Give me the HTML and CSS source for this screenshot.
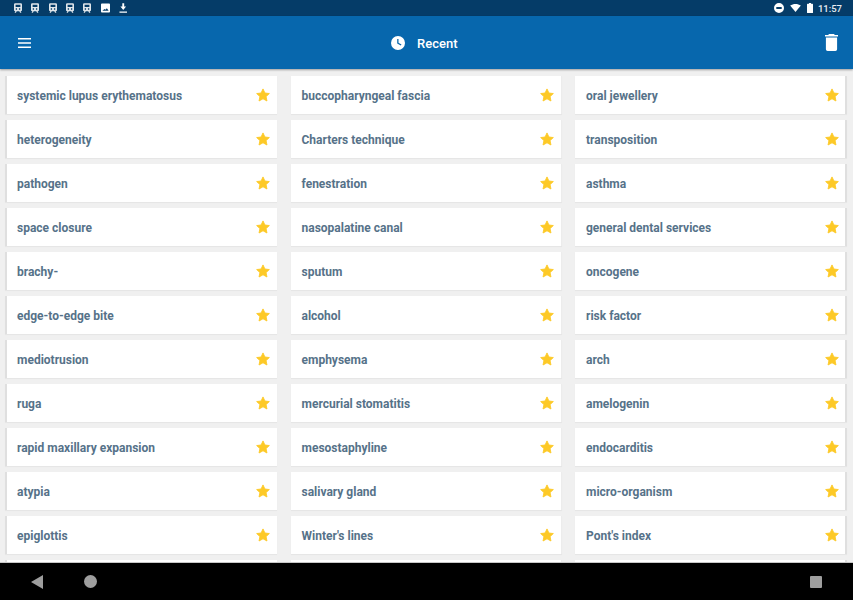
FILE: index.html
```html
<!DOCTYPE html>
<html lang="en">
<head>
<meta charset="utf-8">
<title>Recent</title>
<link rel="stylesheet" href="styles.css">
</head>
<body>
<svg class="defs" width="0" height="0" aria-hidden="true">
  <defs>
    <symbol id="star" viewBox="0 0 24 24"><path d="M12 1.600l3.300 7 7.600.9-5.600 5.200 1.500 7.600L12 18.500l-6.800 3.800 1.500-7.600L1.100 9.500l7.600-.9z" stroke-linejoin="round"/></symbol>
    <symbol id="train" viewBox="0 0 10 12"><path fill-rule="evenodd" d="M1.500 0h7A1.500 1.500 0 0 1 10 1.500v7A1.500 1.500 0 0 1 8.500 10h-.2l1 2H7.600l-1-2H3.400l-1 2H.7l1-2h-.2A1.500 1.500 0 0 1 0 8.500v-7A1.500 1.500 0 0 1 1.500 0zM2 2v2.600h6V2zm.2 4.400v1.700h1.600V6.400zm4 0v1.700h1.600V6.400z"/></symbol>
  </defs>
</svg>
<div class="screen">
  <div class="status">
    <div class="status-icons">
      <svg class="ic-train"><use href="#train"/></svg>
      <svg class="ic-train"><use href="#train"/></svg>
      <svg class="ic-train"><use href="#train"/></svg>
      <svg class="ic-train"><use href="#train"/></svg>
      <svg class="ic-train"><use href="#train"/></svg>
      <svg class="ic-img" viewBox="0 0 10 10"><path fill-rule="evenodd" d="M1 0h8a1 1 0 0 1 1 1v8a1 1 0 0 1-1 1H1a1 1 0 0 1-1-1V1a1 1 0 0 1 1-1zm.5 8h7L6.500 5.200 5 7 4 6z"/></svg>
      <svg class="ic-dl" viewBox="0 0 9 10"><path d="M3.500 0h2v3.500h2L4.500 7l-3-3.500h2zM.5 8.700h8V10h-8z"/></svg>
    </div>
    <div class="status-right">
      <svg class="ic-dnd" viewBox="0 0 10 10"><path fill-rule="evenodd" d="M5 0a5 5 0 1 1 0 10A5 5 0 0 1 5 0zM2.300 4v2h5.400V4z"/></svg>
      <svg class="ic-wifi" viewBox="0 0 12 9"><path d="M0 1.800C3.500-.6 8.500-.6 12 1.800L6 9z"/></svg>
      <svg class="ic-batt" viewBox="0 0 6 10"><path d="M2 0h2v.8h1.400a.6.600 0 0 1 .6.600v8a.6.600 0 0 1-.6.600H.6A.6.600 0 0 1 0 9.400v-8A.6.600 0 0 1 .6.800H2z"/></svg>
      <span class="time">11:57</span>
    </div>
  </div>
  <header class="appbar">
    <svg class="ic-menu" viewBox="0 0 13 10"><path d="M0 0h13v1.500H0zM0 4.200h13v1.500H0zM0 8.500h13V10H0z"/></svg>
    <div class="title">
      <svg class="ic-clock" viewBox="0 0 14 14"><path fill-rule="evenodd" d="M7 0a7 7 0 1 1 0 14A7 7 0 0 1 7 0zM6.200 3v4.500l3.600 2.100.7-1.100-3-1.800V3z"/></svg>
      <span>Recent</span>
    </div>
    <svg class="ic-trash" viewBox="0 0 13 17"><path d="M4 0h5l.8.9H13v1.700H0V.9h3.200zM.9 3.600h11.200V15.300a1.700 1.700 0 0 1-1.700 1.700H2.600a1.700 1.700 0 0 1-1.700-1.700z"/></svg>
  </header>
  <main class="grid">
    <div class="card"><span>systemic lupus erythematosus</span><svg class="star"><use href="#star"/></svg></div>
    <div class="card"><span>buccopharyngeal fascia</span><svg class="star"><use href="#star"/></svg></div>
    <div class="card"><span>oral jewellery</span><svg class="star"><use href="#star"/></svg></div>
    <div class="card"><span>heterogeneity</span><svg class="star"><use href="#star"/></svg></div>
    <div class="card"><span>Charters technique</span><svg class="star"><use href="#star"/></svg></div>
    <div class="card"><span>transposition</span><svg class="star"><use href="#star"/></svg></div>
    <div class="card"><span>pathogen</span><svg class="star"><use href="#star"/></svg></div>
    <div class="card"><span>fenestration</span><svg class="star"><use href="#star"/></svg></div>
    <div class="card"><span>asthma</span><svg class="star"><use href="#star"/></svg></div>
    <div class="card"><span>space closure</span><svg class="star"><use href="#star"/></svg></div>
    <div class="card"><span>nasopalatine canal</span><svg class="star"><use href="#star"/></svg></div>
    <div class="card"><span>general dental services</span><svg class="star"><use href="#star"/></svg></div>
    <div class="card"><span>brachy-</span><svg class="star"><use href="#star"/></svg></div>
    <div class="card"><span>sputum</span><svg class="star"><use href="#star"/></svg></div>
    <div class="card"><span>oncogene</span><svg class="star"><use href="#star"/></svg></div>
    <div class="card"><span>edge-to-edge bite</span><svg class="star"><use href="#star"/></svg></div>
    <div class="card"><span>alcohol</span><svg class="star"><use href="#star"/></svg></div>
    <div class="card"><span>risk factor</span><svg class="star"><use href="#star"/></svg></div>
    <div class="card"><span>mediotrusion</span><svg class="star"><use href="#star"/></svg></div>
    <div class="card"><span>emphysema</span><svg class="star"><use href="#star"/></svg></div>
    <div class="card"><span>arch</span><svg class="star"><use href="#star"/></svg></div>
    <div class="card"><span>ruga</span><svg class="star"><use href="#star"/></svg></div>
    <div class="card"><span>mercurial stomatitis</span><svg class="star"><use href="#star"/></svg></div>
    <div class="card"><span>amelogenin</span><svg class="star"><use href="#star"/></svg></div>
    <div class="card"><span>rapid maxillary expansion</span><svg class="star"><use href="#star"/></svg></div>
    <div class="card"><span>mesostaphyline</span><svg class="star"><use href="#star"/></svg></div>
    <div class="card"><span>endocarditis</span><svg class="star"><use href="#star"/></svg></div>
    <div class="card"><span>atypia</span><svg class="star"><use href="#star"/></svg></div>
    <div class="card"><span>salivary gland</span><svg class="star"><use href="#star"/></svg></div>
    <div class="card"><span>micro-organism</span><svg class="star"><use href="#star"/></svg></div>
    <div class="card"><span>epiglottis</span><svg class="star"><use href="#star"/></svg></div>
    <div class="card"><span>Winter's lines</span><svg class="star"><use href="#star"/></svg></div>
    <div class="card"><span>Pont's index</span><svg class="star"><use href="#star"/></svg></div>
    <div class="card"></div>
    <div class="card"></div>
    <div class="card"></div>
  </main>
  <nav class="navbar">
    <svg class="ic-back" viewBox="0 0 12 14"><path d="M12 0v14L0 7z"/></svg>
    <div class="ic-home"></div>
    <div class="ic-recents"></div>
  </nav>
</div>
</body>
</html>
```
FILE: styles.css
```css
* { box-sizing: border-box; }
html, body { margin: 0; padding: 0; }
body { width: 853px; height: 600px; overflow: hidden; font-family: Roboto, "Liberation Sans", sans-serif; background: #f0f0f0; }
.defs { display: block; height: 0; }
.screen { width: 853px; height: 600px; display: flex; flex-direction: column; overflow: hidden; }

.status { flex: 0 0 16px; background: #053c68; display: flex; justify-content: space-between; align-items: center; padding: 0 11px 0 14px; color: #fff; }
.status-icons, .status-right { display: flex; align-items: center; }
.status-icons svg { fill: #dfe5ea; }
.ic-train { width: 8px; height: 10px; margin-right: 9.330px; }
.status-icons .ic-img { width: 9px; height: 10px; margin: 0 9px 0 0; fill: #fff; }
.status-icons .ic-dl { width: 8.500px; height: 10px; fill: #fff; }
.status-right svg { fill: #fff; }
.ic-dnd { width: 10px; height: 10px; margin-right: 6px; }
.ic-wifi { width: 11px; height: 8px; margin-right: 6px; }
.ic-batt { width: 6px; height: 10px; margin-right: 5px; }
.time { font-size: 9.500px; font-weight: 500; color: #e8edf2; }

.appbar { flex: 0 0 53px; background: #0767ad; display: flex; align-items: center; justify-content: space-between; padding: 0 15px 0 18px; position: relative; box-shadow: 0 1px 2px rgba(0,0,0,.35); z-index: 1; fill: #fff; }
.ic-menu { width: 13px; height: 10px; }
.ic-trash { width: 13px; height: 17px; }
.title { position: absolute; left: 391px; top: 0; height: 53px; display: flex; align-items: center; color: #fff; font-size: 13px; font-weight: 500; padding-top: 1px; }
.title span { margin-left: 12px; }
.ic-clock { width: 14px; height: 14px; margin-bottom: 1px; }

.grid { flex: 1 1 auto; min-height: 0; overflow: hidden; padding: 7px 0 0 5px; display: grid; grid-template-columns: 272px 271px 272px; column-gap: 13.500px; grid-auto-rows: 38px; row-gap: 6px; align-content: start; background: #f0f0f0; }
.card { background: #fff; display: flex; align-items: center; justify-content: space-between; padding: 0 6.500px 0 11px; box-shadow: 0 1px 1px rgba(0,0,0,.04); border-right: 1px solid #ececec; }
.card:nth-child(3n+1) { border-left: 2px solid #dfdfdf; border-right: 0; padding: 0 7px 0 10px; }
.card:nth-child(3n) { border-right: 2px solid #dfdfdf; padding: 0 6px 0 11px; }
.card span { font-size: 12px; font-weight: 700; color: #567289; white-space: nowrap; margin-top: 1px; }
.star { width: 14px; height: 14px; fill: #fdc927; stroke: #fdc927; stroke-width: 1.500; overflow: visible; }

.navbar { flex: 0 0 38px; background: #000; position: relative; display: flex; align-items: center; border-top: 1px solid #c8c8c8; z-index: 1; }
.ic-back { width: 12px; height: 14px; fill: #9e9e9e; margin-left: 31px; }
.ic-home { width: 13px; height: 13px; border-radius: 50%; background: #9e9e9e; margin-left: 41px; }
.ic-recents { width: 12px; height: 12px; background: #9e9e9e; border-radius: 1px; margin-left: auto; margin-right: 31.500px; }
```
